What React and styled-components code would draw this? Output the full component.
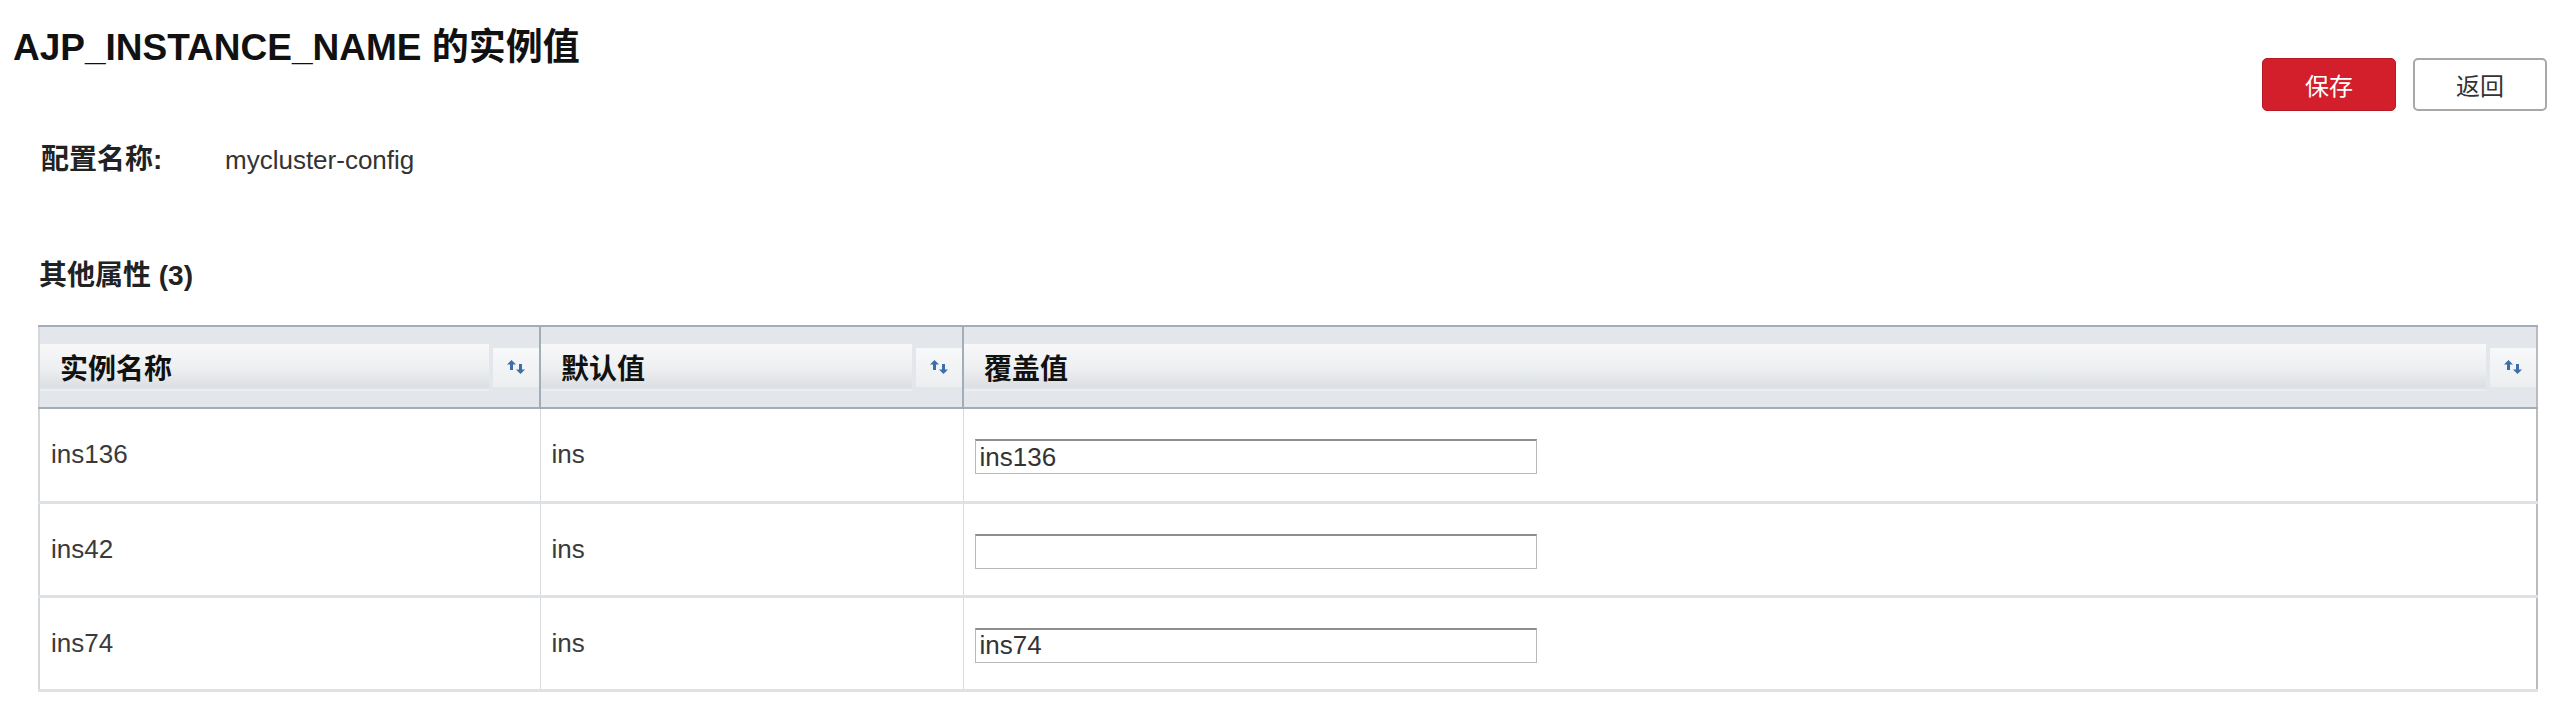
import React from 'react';
import styled, { createGlobalStyle } from 'styled-components';

const GlobalStyle = createGlobalStyle`
    body {
        margin: 0;
        background: #ffffff;
        color: #333333;
        font-family: "Liberation Sans", Arial, "Noto Sans CJK SC", sans-serif;
    }
`;

const Page = styled.div`
    padding: 0 13px;
`;

const TitleRow = styled.div`
    display: flex;
    justify-content: space-between;
    align-items: flex-start;
`;

const Title = styled.h1`
    margin: 29px 0 0;
    font-size: 37px;
    line-height: 37px;
    font-weight: bold;
    color: #111111;
`;

const Actions = styled.div`
    display: flex;
    gap: 17px;
    margin-top: 58px;
`;

const Button = styled.button`
    width: 134px;
    height: 53px;
    border-radius: 5px;
    font-family: inherit;
    font-size: 24px;
    cursor: pointer;
    background: ${(p) => (p.$primary ? '#d31f2b' : '#ffffff')};
    color: ${(p) => (p.$primary ? '#ffffff' : '#333333')};
    border: ${(p) => (p.$primary ? '1px solid #b81a25' : '2px solid #a8a8a8')};
`;

const Content = styled.div`
    padding: 0 9px 0 25px;
`;

const ConfigRow = styled.div`
    display: flex;
    margin: 34px 0 0 3px;
    line-height: 30px;
`;

const ConfigLabel = styled.span`
    width: 184px;
    font-size: 28px;
    font-weight: bold;
    color: #222222;
`;

const ConfigValue = styled.span`
    font-size: 26px;
    color: #333333;
`;

const SectionTitle = styled.h2`
    margin: 86px 0 0 1px;
    font-size: 28px;
    line-height: 30px;
    font-weight: bold;
    color: #222222;
`;

const Table = styled.table`
    margin-top: 34px;
    width: 100%;
    border-collapse: collapse;
    table-layout: fixed;
    border-left: 2px solid #d3d8dc;
    border-right: 2px solid #b8bcc0;
`;

const HeadCell = styled.th`
    height: 80px;
    padding: 0;
    background: #e3e7eb;
    border-top: 2px solid #a2adb7;
    border-bottom: 2px solid #a2adb7;
    border-left: 2px solid #a2adb7;
    &:first-child {
        border-left: none;
    }
`;

const HeadInner = styled.div`
    display: flex;
    align-items: center;
    gap: 4px;
    height: 47px;
`;

const HeadBand = styled.div`
    flex: 1;
    height: 100%;
    display: flex;
    align-items: center;
    padding-left: 20px;
    box-sizing: border-box;
    background: linear-gradient(#f8f8f9, #eceef0 55%, #dcdfe3 92%, #f0f1f3);
    font-size: 28px;
    font-weight: bold;
    color: #111111;
    text-align: left;
`;

const SortBand = styled.div`
    width: 46px;
    height: 39px;
    display: flex;
    align-items: center;
    justify-content: center;
    background: linear-gradient(#f7f8f9, #eceef0);
`;

const Row = styled.tr`
    height: 94px;
    border-bottom: 3px solid #dfe2e5;
`;

const Cell = styled.td`
    padding: 0 11px;
    font-size: 26px;
    color: #3a3a3a;
    border-left: 1px solid #d6dadd;
    &:first-child {
        border-left: none;
    }
`;

const ValueInput = styled.input`
    display: block;
    width: 562px;
    height: 35px;
    box-sizing: border-box;
    padding: 0 4px;
    margin-top: 4px;
    font-family: inherit;
    font-size: 26px;
    color: #333333;
    border: 1px solid #b8b8b8;
    border-top: 2px solid #8e8e8e;
    outline: none;
`;

const SortIcon = () => (
    <svg width="18" height="14" viewBox="0 0 18 14">
        <path d="M4.5 0 L9 4.5 H6 V10 H3 V4.5 H0 Z" fill="#3c6ea8" />
        <path d="M13.5 14 L18 9.5 H15 V4 H12 V9.5 H9 Z" fill="#3c6ea8" />
    </svg>
);

const columns = [
    { title: '实例名称', width: '501px' },
    { title: '默认值', width: '423px' },
    { title: '覆盖值' },
];

const rows = [
    { name: 'ins136', def: 'ins', value: 'ins136' },
    { name: 'ins42', def: 'ins', value: '' },
    { name: 'ins74', def: 'ins', value: 'ins74' },
];

const App = () => {
    return (
        <Page>
            <GlobalStyle />
            <TitleRow>
                <Title>AJP_INSTANCE_NAME 的实例值</Title>
                <Actions>
                    <Button $primary>保存</Button>
                    <Button>返回</Button>
                </Actions>
            </TitleRow>
            <Content>
                <ConfigRow>
                    <ConfigLabel>配置名称:</ConfigLabel>
                    <ConfigValue>mycluster-config</ConfigValue>
                </ConfigRow>
                <SectionTitle>其他属性 (3)</SectionTitle>
                <Table>
                    <colgroup>
                        {columns.map((c) => (
                            <col key={c.title} style={c.width ? { width: c.width } : undefined} />
                        ))}
                    </colgroup>
                    <thead>
                        <tr>
                            {columns.map((c) => (
                                <HeadCell key={c.title}>
                                    <HeadInner>
                                        <HeadBand>{c.title}</HeadBand>
                                        <SortBand>
                                            <SortIcon />
                                        </SortBand>
                                    </HeadInner>
                                </HeadCell>
                            ))}
                        </tr>
                    </thead>
                    <tbody>
                        {rows.map((r) => (
                            <Row key={r.name}>
                                <Cell>{r.name}</Cell>
                                <Cell>{r.def}</Cell>
                                <Cell>
                                    <ValueInput defaultValue={r.value} />
                                </Cell>
                            </Row>
                        ))}
                    </tbody>
                </Table>
            </Content>
        </Page>
    );
};

export default App;
